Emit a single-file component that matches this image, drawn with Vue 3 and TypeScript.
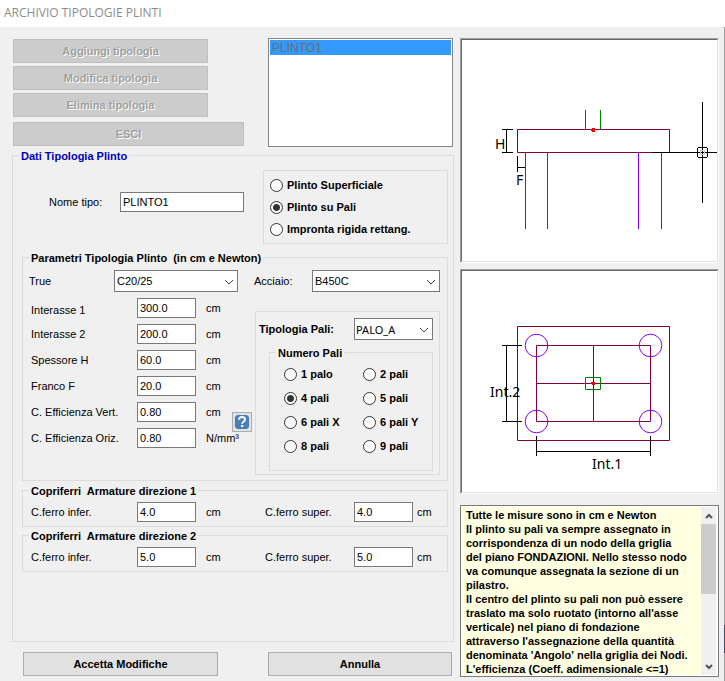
<script setup lang="ts">
import { ref } from 'vue'

interface Field {
  id: string
  label: string
  value: string
  unit: string
}

const types = ['PLINTO1']
const selectedType = ref('PLINTO1')
const typeName = ref('PLINTO1')

const kinds = ['Plinto Superficiale', 'Plinto su Pali', 'Impronta rigida rettang.']
const kind = ref('Plinto su Pali')

const concrete = ref('C20/25')
const steel = ref('B450C')
const pile = ref('PALO_A')

const fields = ref<Field[]>([
  { id: 'int1', label: 'Interasse 1', value: '300.0', unit: 'cm' },
  { id: 'int2', label: 'Interasse 2', value: '200.0', unit: 'cm' },
  { id: 'thick', label: 'Spessore H', value: '60.0', unit: 'cm' },
  { id: 'edge', label: 'Franco F', value: '20.0', unit: 'cm' },
  { id: 'effv', label: 'C. Efficienza Vert.', value: '0.80', unit: 'cm' },
  { id: 'effo', label: 'C. Efficienza Oriz.', value: '0.80', unit: 'N/mm³' },
])

const pileCounts = ['1 palo', '2 pali', '4 pali', '5 pali', '6 pali X', '6 pali Y', '8 pali', '9 pali']
const pileCount = ref('4 pali')

const covers = ref([
  { id: 'c1', title: 'Copriferri  Armature direzione 1', lower: '4.0', upper: '4.0' },
  { id: 'c2', title: 'Copriferri  Armature direzione 2', lower: '5.0', upper: '5.0' },
])

const notes = [
  'Tutte le misure sono in cm e Newton',
  'Il plinto su pali va sempre assegnato in',
  'corrispondenza di un nodo della griglia',
  'del piano FONDAZIONI. Nello stesso nodo',
  'va comunque assegnata la sezione di un',
  'pilastro.',
  'Il centro del plinto su pali non può essere',
  "traslato ma solo ruotato (intorno all'asse",
  'verticale) nel piano di fondazione',
  "attraverso l'assegnazione della quantità",
  "denominata 'Angolo' nella griglia dei Nodi.",
  "L'efficienza (Coeff. adimensionale <=1)",
].join('\n')
</script>

<template>
  <div class="window">
    <header class="titlebar">ARCHIVIO TIPOLOGIE PLINTI</header>
    <main class="body">
      <div class="left">
        <div class="top">
          <div class="actions">
            <button type="button" class="btn short" disabled>Aggiungi tipologia</button>
            <button type="button" class="btn short" disabled>Modifica tipologia</button>
            <button type="button" class="btn short" disabled>Elimina tipologia</button>
            <button type="button" class="btn exit" disabled>ESCI</button>
          </div>
          <div class="list" role="listbox" aria-label="Tipologie">
            <div
              v-for="t in types"
              :key="t"
              role="option"
              class="option"
              :class="{ selected: t === selectedType }"
              :aria-selected="t === selectedType"
              @click="selectedType = t"
            >{{ t }}</div>
          </div>
        </div>

        <fieldset class="group data">
          <legend class="blue">Dati Tipologia Plinto</legend>
          <div class="name-row">
            <div class="name">
              <label for="name">Nome tipo:</label>
              <input id="name" v-model="typeName" class="text" type="text" />
            </div>
            <div class="kinds" role="radiogroup">
              <label v-for="k in kinds" :key="k" class="radio">
                <input v-model="kind" type="radio" name="kind" :value="k" />{{ k }}
              </label>
            </div>
          </div>

          <fieldset class="group params">
            <legend>Parametri Tipologia Plinto&nbsp; (in cm e Newton)</legend>
            <div class="materials">
              <label for="concrete">True</label>
              <span class="combo">
                <select id="concrete" v-model="concrete"><option>C20/25</option></select>
                <svg class="chevron" viewBox="0 0 10 6"><path d="M1 1l4 4 4-4" /></svg>
              </span>
              <label for="steel" class="steel">Acciaio:</label>
              <span class="combo">
                <select id="steel" v-model="steel"><option>B450C</option></select>
                <svg class="chevron" viewBox="0 0 10 6"><path d="M1 1l4 4 4-4" /></svg>
              </span>
            </div>

            <div class="params-body">
              <div class="fields">
                <template v-for="f in fields" :key="f.id">
                  <label class="c1" :for="f.id">{{ f.label }}</label>
                  <input :id="f.id" v-model="f.value" class="text" type="text" />
                  <span class="unit">{{ f.unit }}</span>
                </template>
                <button type="button" class="help" aria-label="Aiuto">
                  <svg viewBox="0 0 14 14">
                    <path d="M2 0h10l2 2v10l-2 2H2l-2-2V2z" fill="#4a7ebb" />
                    <path d="M4 4.8C4 2.8 5.3 2 7 2s3.1.9 3.1 2.6C10.100 6.600 7.200 6.500 7.200 8.700" fill="none" stroke="#fff" stroke-width="1.900" />
                    <rect x="6" y="10" width="2.300" height="2" fill="#fff" />
                  </svg>
                </button>
              </div>

              <div class="piles">
                <div class="pile-type">
                  <label for="pile">Tipologia Pali:</label>
                  <span class="combo">
                    <select id="pile" v-model="pile" class="ui"><option>PALO_A</option></select>
                    <svg class="chevron" viewBox="0 0 10 6"><path d="M1 1l4 4 4-4" /></svg>
                  </span>
                </div>
                <fieldset class="group count">
                  <legend>Numero Pali</legend>
                  <div class="count-grid">
                    <label v-for="c in pileCounts" :key="c" class="radio">
                      <input v-model="pileCount" type="radio" name="count" :value="c" />{{ c }}
                    </label>
                  </div>
                </fieldset>
              </div>
            </div>
          </fieldset>

          <fieldset v-for="c in covers" :key="c.id" class="group cover">
            <legend>{{ c.title }}</legend>
            <div class="cover-row">
              <label :for="c.id + 'l'">C.ferro infer.</label>
              <input :id="c.id + 'l'" v-model="c.lower" class="text" type="text" />
              <span class="unit">cm</span>
              <label :for="c.id + 'u'">C.ferro super.</label>
              <input :id="c.id + 'u'" v-model="c.upper" class="text" type="text" />
              <span class="unit-tight">cm</span>
            </div>
          </fieldset>
        </fieldset>

        <div class="bottom">
          <button type="button" class="btn">Accetta Modifiche</button>
          <button type="button" class="btn">Annulla</button>
        </div>
      </div>

      <div class="right">
        <div class="view">
          <svg viewBox="0 0 255 221" role="img" aria-label="Prospetto">
            <g class="line maroon"><path d="M55.5 89.500H207.500V112.500H55.500Z" /></g>
            <g class="line green"><path d="M123.500 70V89M138.500 70V89" /></g>
            <g class="line violet"><path d="M63.500 112V189M85.500 112V189M176.500 112V189M199.500 112V189" /></g>
            <g class="line black">
              <path d="M190 112.500H255M240.500 62V163" />
              <path d="M40 89.500H51M40 112.500H51M44.500 89V112" />
              <path d="M55.500 116V132M55 127.500H63" />
            </g>
            <path d="M236 107h9v1h1v9h-1v1h-9v-1h-1v-9h1z" fill="#fff" />
            <g class="line black">
              <path d="M236 107.500H245M236 117.500H245M235.500 108V117M245.500 108V117" />
              <path d="M240.500 108V117M236 112.500H245" />
              <path d="M238 110.500H243M238 114.500H243M238.500 110V115M242.500 110V115" class="faint" />
            </g>
            <path class="red" d="M130 88h3v4h-3zM129 89h4v2h-4z" />
            <text x="33" y="109">H</text>
            <text x="54" y="145">F</text>
          </svg>
        </div>
        <div class="view">
          <svg viewBox="0 0 255 221" role="img" aria-label="Pianta">
            <g class="line maroon">
              <path d="M55.500 55.500H207.500V169.500H55.500Z" />
              <path d="M74.500 74.500H188.500V150.500H74.500ZM131.500 74V150M74 112.500H188" />
            </g>
            <g class="line violet">
              <circle cx="74.500" cy="74.500" r="11.300" />
              <circle cx="188.500" cy="74.500" r="11.300" />
              <circle cx="74.500" cy="150.500" r="11.300" />
              <circle cx="188.500" cy="150.500" r="11.300" />
            </g>
            <g class="line green"><path d="M123.500 106.500H138.500V118.500H123.500Z" /></g>
            <g class="line black">
              <path d="M40 74.500H60M40 150.500H60M44.500 74V150" />
              <path d="M74.500 165V185M188.500 165V185M74 180.500H188" />
            </g>
            <path class="red" d="M130 111h3v3h-3zM129 111h4v2h-4z" />
            <text x="28" y="126">Int.2</text>
            <text x="130" y="198">Int.1</text>
          </svg>
        </div>
        <div class="notes">
          <textarea readonly aria-label="Note" :value="notes"></textarea>
          <div class="scroll">
            <button type="button" aria-label="Su"><svg viewBox="0 0 8 6"><path d="M1 5l3-3 3 3" /></svg></button>
            <div class="track"><div class="thumb"></div></div>
            <button type="button" aria-label="Giù"><svg viewBox="0 0 8 6"><path d="M1 1l3 3 3-3" /></svg></button>
          </div>
        </div>
      </div>
    </main>
  </div>
</template>

<style>
body {
  margin: 0;
  background: #f0f0f0;
}
</style>

<style scoped>
.window {
  font: 11px/15px "Liberation Sans", Arial, sans-serif;
  color: #000;
  background: #f0f0f0;
}
.window *,
.window {
  box-sizing: border-box;
}
.titlebar {
  height: 27px;
  padding-left: 4px;
  background: #fff;
  color: #8c8c8c;
  font: 12px/25px "Open Sans", "Noto Sans", sans-serif;
}
.body {
  position: relative;
  display: grid;
  grid-template-columns: minmax(0, 1fr) 259px;
  gap: 6px;
  padding: 11px 5px 5px 12px;
  border-right: 1px solid #a0a0a0;
}
/* sliver of the window behind, showing over the right edge */
.body::after {
  content: "";
  position: absolute;
  right: -1px;
  bottom: 29px;
  width: 1px;
  height: 28px;
  background: #3f4c70;
}
.top {
  display: flex;
  justify-content: space-between;
  padding: 0 1px;
}
.actions {
  display: flex;
  flex-direction: column;
  gap: 3px;
  width: 231px;
  padding-top: 1px;
}
.btn {
  height: 24px;
  padding: 0;
  border: 1px solid #adadad;
  border-radius: 0;
  background: #e1e1e1;
  color: #000;
  font: bold 11px/15px "Liberation Sans", Arial, sans-serif;
}
.btn:disabled {
  border-color: #bfbfbf;
  background: #ccc;
  color: #a0a0a0;
  text-shadow: 1px 1px 0 #fff;
}
.short {
  width: 195px;
}
.exit {
  margin-top: 2px;
}
.list {
  width: 185px;
  height: 109px;
  padding: 1px;
  border: 1px solid #828790;
  background: #fff;
}
.option {
  height: 15px;
  padding-left: 2px;
  font-size: 12px;
  line-height: 17px;
}
.selected {
  background: #39f;
  color: #6d6d6d;
}
.group {
  min-width: 0;
  margin: 0;
  padding: 0;
  border: 1px solid #dcdcdc;
}
legend {
  height: 15px;
  margin-left: 6px;
  padding: 0 2px;
  font-weight: bold;
  line-height: 17px;
  white-space: pre;
}
.blue {
  margin-left: -3px;
  color: #0000b4;
}
.data {
  margin-top: 1px;
  padding: 7px 5px 69px 9px;
}
.name-row {
  display: grid;
  grid-template-columns: 222px minmax(0, 1fr);
  gap: 19px;
}
.name {
  display: grid;
  grid-template-columns: 71px 1fr;
  align-items: center;
  height: 20px;
  margin-top: 22px;
  padding-left: 27px;
}
.text {
  width: 100%;
  min-width: 0;
  height: 20px;
  margin: 0;
  padding: 0 2px;
  border: 1px solid #7a7a7a;
  border-radius: 0;
  background: #fff;
  color: #000;
  font: 11px/15px "Liberation Sans", Arial, sans-serif;
}
.kinds {
  height: 74px;
  padding: 3px 6px;
  border: 1px solid #dcdcdc;
}
.radio {
  display: flex;
  align-items: center;
  gap: 4px;
  height: 22px;
  font-weight: bold;
  white-space: nowrap;
}
.radio input {
  appearance: none;
  flex: none;
  width: 13px;
  height: 13px;
  margin: 0;
  border: 1px solid #333;
  border-radius: 50%;
  background: #fff;
}
.radio input:checked {
  background: radial-gradient(circle, #333 3px, #fff 4px);
}
.params {
  margin-top: 6px;
  padding-bottom: 5px;
}
.materials {
  display: grid;
  grid-template-columns: 85px 124px 74px minmax(0, 1fr);
  align-items: center;
  padding: 5px 7px 0 6px;
}
.steel {
  padding-left: 16px;
}
.combo {
  position: relative;
  display: block;
}
select {
  display: block;
  appearance: none;
  width: 100%;
  height: 22px;
  margin: 0;
  padding: 0 2px;
  border: 1px solid #7a7a7a;
  border-radius: 0;
  background: #fff;
  color: #000;
  font: 11px/15px "Liberation Sans", Arial, sans-serif;
}
.ui {
  padding: 0 1px;
  font-family: "Noto Sans", sans-serif;
}
.chevron {
  position: absolute;
  top: 9px;
  right: 4px;
  width: 10px;
  height: 6px;
  fill: none;
  stroke: #444;
  pointer-events: none;
}
.params-body {
  display: grid;
  grid-template-columns: 224px minmax(0, 1fr);
  gap: 0;
  padding: 6px 7px 0 8px;
}
.fields {
  display: grid;
  grid-template-columns: 106px 59px 36px 20px;
  grid-auto-rows: 20px;
  row-gap: 6px;
  align-items: center;
  white-space: nowrap;
}
.c1 {
  grid-column: 1;
}
.c1:first-child {
  align-self: end;
}
.unit {
  padding-left: 10px;
}
.help {
  grid-area: 5 / 4 / 7 / 5;
  align-self: start;
  display: flex;
  align-items: center;
  justify-content: center;
  height: 20px;
  margin-top: 10px;
  padding: 0;
  border: 1px solid #adadad;
  border-radius: 0;
  background: #e1e1e1;
}
.help svg {
  flex: none;
  width: 14px;
  height: 14px;
}
.piles {
  margin-top: 13px;
  padding: 6px 6px 3px 3px;
  border: 1px solid #dcdcdc;
}
.pile-type {
  display: grid;
  grid-template-columns: minmax(0, 1fr) 79px;
  align-items: center;
  font-weight: bold;
}
.count {
  margin: 5px 0 0 10px;
  padding-bottom: 12px;
}
.count-grid {
  display: grid;
  grid-template-columns: 79px minmax(0, 1fr);
  grid-auto-rows: 24px;
  align-items: center;
  padding: 2px 0 0 14px;
}
.cover {
  margin-top: 2px;
  padding: 4px 0;
}
.cover + .cover {
  margin-top: 1px;
}
.cover-row {
  display: grid;
  grid-template-columns: 106px 59px 69px 89px 59px 1fr;
  align-items: center;
  padding-left: 8px;
}
.unit-tight {
  padding-left: 4px;
}
.bottom {
  display: grid;
  grid-template-columns: 195fr 184fr;
  gap: 50px;
  margin: 10px 2px 0 11px;
}
.right {
  display: flex;
  flex-direction: column;
  gap: 6px;
}
.view {
  border: 1px solid;
  border-color: #a0a0a0 #fff #fff #a0a0a0;
}
.view svg {
  display: block;
  width: 100%;
  border: 1px solid;
  border-color: #696969 #e3e3e3 #e3e3e3 #696969;
  background: #fff;
}
.view text {
  font: 14px "Noto Sans", sans-serif;
}
.line {
  fill: none;
  stroke-width: 1px;
}
.maroon {
  stroke: #800040;
}
.green {
  stroke: #008000;
}
.violet {
  stroke: #8000ff;
}
.black {
  stroke: #000;
}
.faint {
  stroke: #ccc;
}
.red {
  fill: #f00;
}
.notes {
  display: flex;
  height: 172px;
  margin-top: 5px;
  padding: 1px 2px 1px 1px;
  border: 1px solid #7a7a7a;
  background: #fff;
}
.notes textarea {
  flex: 1;
  min-width: 0;
  margin: 0;
  padding: 1px 0 0 4px;
  border: 0;
  outline: 0;
  resize: none;
  overflow: hidden;
  background: #ffffe1;
  color: #000;
  font: bold 11px/14px "Liberation Sans", Arial, sans-serif;
  white-space: pre;
}
.scroll {
  display: flex;
  flex-direction: column;
  width: 15px;
  background: #f0f0f0;
}
.scroll button {
  display: flex;
  align-items: center;
  justify-content: center;
  height: 17px;
  padding: 0;
  border: 0;
  background: none;
}
.scroll svg {
  width: 8px;
  height: 6px;
  fill: none;
  stroke: #555;
  stroke-width: 2px;
}
.track {
  flex: 1;
}
.thumb {
  height: 70px;
  background: #cdcdcd;
}
</style>
